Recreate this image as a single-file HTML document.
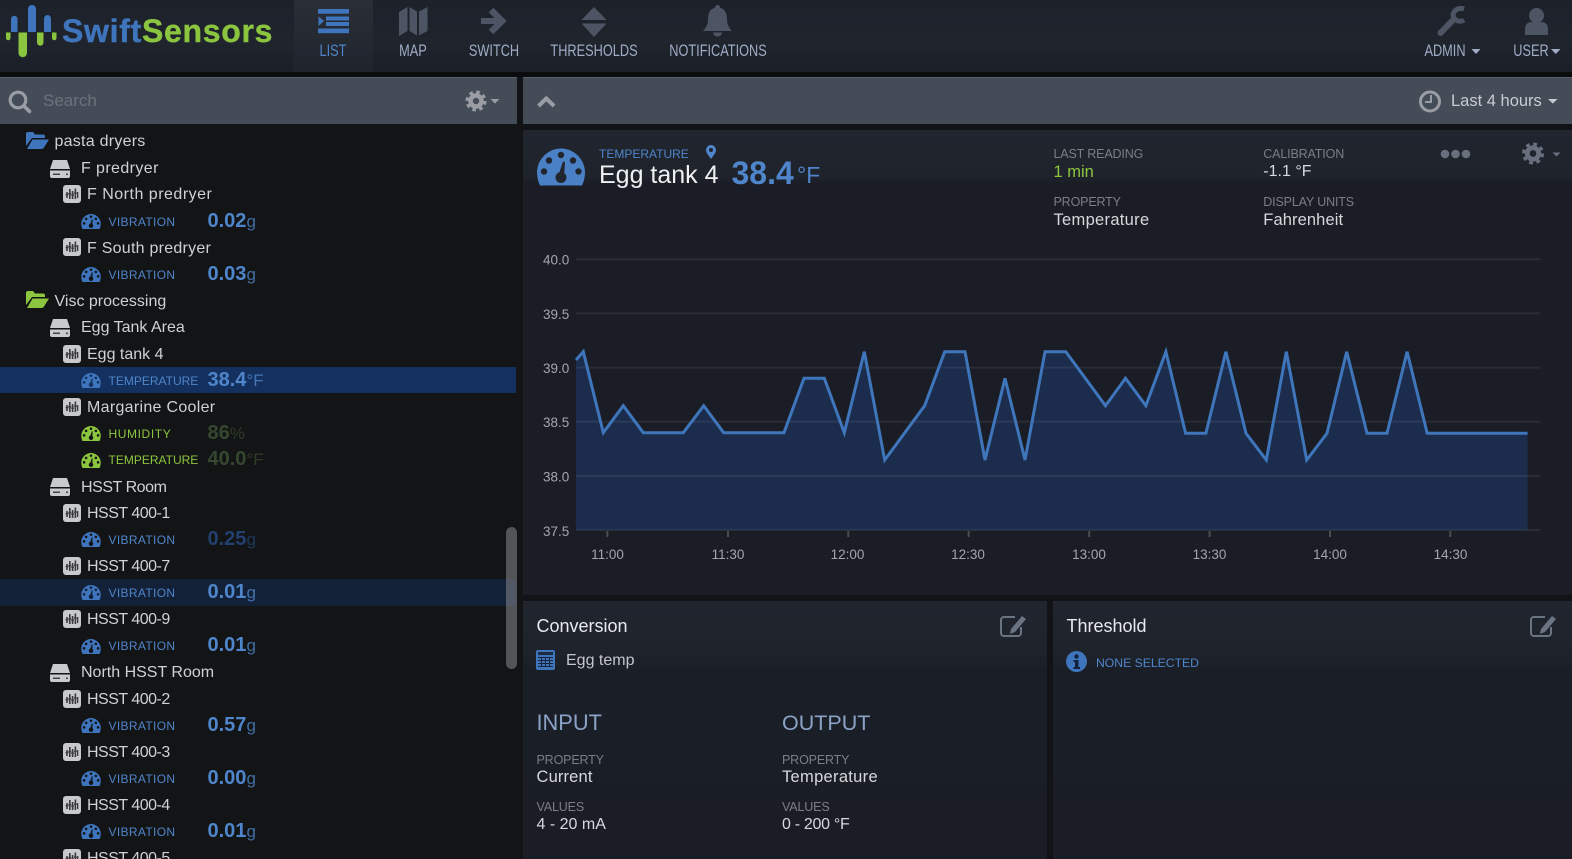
<!DOCTYPE html>
<html><head><meta charset="utf-8"><title>Swift Sensors</title>
<style>
html,body{margin:0;padding:0;width:1572px;height:859px;overflow:hidden;background:#121316;font-family:"Liberation Sans",sans-serif;color:#d4d6da}
.a{position:absolute;white-space:nowrap}
.t{position:absolute;white-space:nowrap;line-height:20px}
#nav{position:absolute;left:0;top:0;width:1572px;height:72px;background:linear-gradient(#1d212a,#1f242d 60%,#1b1f27)}
#tab{position:absolute;left:294px;top:0;width:79px;height:72px;background:linear-gradient(#2a2e37,#20242d)}
.n{position:absolute;top:41px;line-height:20px;font-size:17px;color:#9fadc6;white-space:nowrap;transform:translateX(-50%) scaleX(.75)}
#band{position:absolute;left:0;top:72px;width:1572px;height:5px;background:#0b0c0e}
.bar{position:absolute;top:77px;height:47px;background:#444c58;box-shadow:0 1px 0 #5a616c inset}
#tree{position:absolute;left:0;top:124px;width:523px;height:735px;overflow:hidden;background:#131416}
#rows{position:absolute;left:0;top:3.9px;width:516px}
.r{position:relative;height:26.55px;line-height:26.55px;font-size:16px;color:#cfd1d4;white-space:nowrap}
.r>*{position:absolute}
.r span{top:1.5px}
.r svg{top:50%}
.r .k{font-size:12px;color:#4f86cb;left:108.5px;top:1px}
.k.m{letter-spacing:.35px}
.r .v{left:207.5px;font-size:20px;font-weight:bold;color:#4f86cb;top:0}
.v small{font-size:17px;font-weight:normal;opacity:.8}
.g .k{color:#8cc63f}
.g .v{color:#35482f}
.hl{background:#14305e}
.hl2{background:#122038}
#main{position:absolute;left:523px;top:130px;width:1049px;height:465px;background:linear-gradient(#20252e 0,#1f232c 46px,#1a1d25 54px,#1a1d25)}
.p{position:absolute;top:601px;height:258px;background:linear-gradient(#20252e 0,#1f232c 48px,#1a1e26 70px,#1a1d25)}
.l{font-size:12.5px;color:#7b7e84;letter-spacing:-.15px}
.w{font-size:16.5px;color:#d6d8db}
svg{display:block}
</style></head><body>
<svg width="0" height="0" style="position:absolute"><defs>
<symbol id="ga" viewBox="0 0 48 37"><path fill="currentColor" d="M3 37C1 33 0 28 0 24 0 11 11 0 24 0s24 11 24 24c0 4-1 9-3 13z"/><g fill="var(--h,#131416)"><circle cx="7" cy="23" r="3.2"/><circle cx="12" cy="12" r="3.2"/><circle cx="24" cy="6.5" r="3.2"/><circle cx="36" cy="12" r="3.2"/><circle cx="41.5" cy="23" r="3.2"/><circle cx="24" cy="29" r="5.5"/><path d="M21 28 26 13l2 .5L27 29z"/></g></symbol>
<symbol id="dr" viewBox="0 0 22 18"><path fill="#c9cacc" d="M4 0H18L21 9H1z"/><path fill="#c9cacc" d="M1 10.500H21V16a2 2 0 0 1-2 2H3a2 2 0 0 1-2-2z"/><rect x="4" y="13.500" width="7" height="1.500" fill="#444"/><circle cx="18" cy="14.200" r="1" fill="#444"/></symbol>
<symbol id="mo" viewBox="0 0 18 18"><rect width="18" height="18" rx="3" fill="#c8c9cb"/><g fill="#3a3a3c"><rect x="3.200" y="7" width="1.600" height="6"/><rect x="6" y="4" width="1.600" height="10"/><rect x="8.800" y="6" width="1.600" height="8"/><rect x="11.600" y="3.500" width="1.600" height="10.500"/><rect x="14" y="7" width="1.300" height="6"/><rect x="2.600" y="9" width="2.800" height="1.300"/><rect x="5.400" y="8" width="2.800" height="1.300"/><rect x="8.200" y="9.500" width="2.800" height="1.300"/><rect x="11" y="7.500" width="2.800" height="1.300"/></g></symbol>
<symbol id="fo" viewBox="0 0 23 17"><path fill="currentColor" d="M0 2a2 2 0 0 1 2-2h5l2 2.500h8a2 2 0 0 1 2 2V6H6L0 14z"/><path fill="currentColor" d="M6.500 7.500H23l-5 8a3 3 0 0 1-2 1.500H1z"/></symbol>
<symbol id="ge" viewBox="-12 -12 24 24"><circle r="6" fill="none" stroke="currentColor" stroke-width="5"/><circle r="9.500" fill="none" stroke="currentColor" stroke-width="4" stroke-dasharray="3.800 3.660"/></symbol>
<symbol id="ed" viewBox="0 0 27 22"><path fill="none" stroke="#6b7483" stroke-width="2" d="M15 2H4a3 3 0 0 0-3 3v13a3 3 0 0 0 3 3h14a3 3 0 0 0 3-3v-6"/><path fill="#6b7483" d="M22 1l4 3-11 13-5 2 1-5z"/></symbol>
</defs></svg>

<div id="nav"></div><div id="tab"></div>
<svg class="a" style="left:0;top:0" width="60" height="62"><g fill="#3f75bd"><path d="M11 32V19a3.200 3.200 0 0 1 6.500 0V32z"/><path d="M28 32V9a4 4 0 0 1 8 0V32z"/><path d="M44 32V18.500a3.500 3.500 0 0 1 7 0V32z"/></g><g fill="#8bc53f"><path d="M6 32.500h4.500V38a2.200 2.200 0 0 1-4.500 0z"/><path d="M18.500 32.500H27V53a4.200 4.200 0 0 1-8.500 0z"/><path d="M37 32.500h6.500V42.500a3.200 3.200 0 0 1-6.500 0z"/><path d="M52 32.500h4.500V38a2.200 2.200 0 0 1-4.500 0z"/></g></svg>
<div class="a" style="left:62px;top:12px;font-size:32px;line-height:38px;font-weight:bold;letter-spacing:.7px;color:#3f75bd;-webkit-text-stroke:.4px #3f75bd">Swift<span style="color:#8bc53f;-webkit-text-stroke:.4px #8bc53f">Sensors</span></div>

<svg class="a" style="left:0;top:0" width="1572" height="72">
<g fill="#3f75bd"><rect x="318" y="9" width="31" height="4.700"/><rect x="326" y="16.500" width="23" height="4"/><rect x="326" y="22" width="23" height="4"/><rect x="318" y="28.500" width="31" height="4.700"/><path d="M318.500 16.500 324 21l-5.500 5z"/></g>
<g fill="#4d5564"><path d="M399 12l8.500-5v24l-8.500 5zM409.500 7l7.500 4.500v24l-7.500-4.500zM419 11.500 427.500 7v24L419 35.500z"/><path d="M581.500 20 594 7l12.500 13zM581.500 23.500h25L594 37z"/>
<path d="M717.500 5a2.500 2.500 0 0 1 2.500 2.700c5.500 1.500 7 6 7 11 0 6 2 9 5 12.300H703c3-3.300 5-6.300 5-12.300 0-5 1.500-9.500 7-11A2.500 2.500 0 0 1 717.500 5zM713 32.500h9a4.500 4 0 0 1-9 0z"/>
<circle cx="1536.500" cy="15.500" r="7.500"/><path d="M1525 35V29c0-5 3-7 7-7h9c4 0 7 2 7 7v6z"/></g>
<g stroke="#4d5564" fill="none"><path stroke-width="6" d="M481 21h21"/><path stroke-width="6.500" d="M491 10l11 11-11 11"/><path stroke-width="6" stroke-linecap="round" d="M1440.500 33 1454 19"/><path stroke-width="5" d="M1464 9a8.500 8.500 0 0 0-11 5 7 7 0 0 0 11 6"/></g>
<g fill="#9fadc6"><path d="M1471.500 49h9l-4.500 5zM1551 49h9.500l-4.700 5z"/></g>
</svg>
<div class="n" style="left:333px;color:#4f86cb">LIST</div>
<div class="n" style="left:413px">MAP</div>
<div class="n" style="left:493.500px">SWITCH</div>
<div class="n" style="left:594px">THRESHOLDS</div>
<div class="n" style="left:717.500px">NOTIFICATIONS</div>
<div class="n" style="left:1444.500px">ADMIN</div>
<div class="n" style="left:1531px">USER</div>

<div id="band"></div>
<div class="bar" style="left:0;width:517px"></div>
<div class="bar" style="left:523px;width:1049px"></div>
<svg class="a" style="left:0;top:77px" width="1572" height="47">
<g fill="none" stroke="#9a9da3"><circle cx="18" cy="23" r="7.800" stroke-width="3.200"/><path stroke-width="3.600" stroke-linecap="round" d="M24 29l5.500 5.500"/><path stroke-width="4" d="M538.500 29l7.800-7.500 7.800 7.500"/><circle cx="1430" cy="24.500" r="9.500" stroke-width="3"/><path stroke-width="2" d="M1431 18v7h-6"/></g>
<use href="#ge" x="465" y="13" width="22" height="22" color="#9a9da3"/>
<path fill="#9a9da3" d="M490.500 22h9l-4.500 4.500z"/>
<path fill="#c8cbd0" d="M1548 22h9.500l-4.700 4.500z"/>
</svg>
<div class="t" style="left:43px;top:90.500px;font-size:17px;color:#6c727c">Search</div>
<div class="t" style="left:1451px;top:91px;font-size:16.500px;color:#c8cbd0">Last 4 hours</div>

<div id="tree"><div id="rows">
<div class="r"><svg style="left:26px;margin-top:-9px;color:#3f75bd" width="23" height="17"><use href="#fo"/></svg><span style="left:54.500px;letter-spacing:.25px">pasta dryers</span></div>
<div class="r"><svg style="left:49px;margin-top:-8px" width="22" height="18"><use href="#dr"/></svg><span style="left:81px;letter-spacing:.4px">F predryer</span></div>
<div class="r"><svg style="left:63px;margin-top:-9px" width="18" height="18"><use href="#mo"/></svg><span style="left:87px;letter-spacing:.5px">F North predryer</span></div>
<div class="r"><svg style="left:80.500px;margin-top:-7px;color:#3f75bd" width="20" height="15"><use href="#ga"/></svg><span class="k m">VIBRATION</span><span class="v">0.02<small>g</small></span></div>
<div class="r"><svg style="left:63px;margin-top:-9px" width="18" height="18"><use href="#mo"/></svg><span style="left:87px;letter-spacing:.25px">F South predryer</span></div>
<div class="r"><svg style="left:80.500px;margin-top:-7px;color:#3f75bd" width="20" height="15"><use href="#ga"/></svg><span class="k m">VIBRATION</span><span class="v">0.03<small>g</small></span></div>
<div class="r"><svg style="left:26px;margin-top:-9px;color:#8cc63f" width="23" height="17"><use href="#fo"/></svg><span style="left:54.500px">Visc processing</span></div>
<div class="r"><svg style="left:49px;margin-top:-8px" width="22" height="18"><use href="#dr"/></svg><span style="left:81px">Egg Tank Area</span></div>
<div class="r"><svg style="left:63px;margin-top:-9px" width="18" height="18"><use href="#mo"/></svg><span style="left:87px">Egg tank 4</span></div>
<div class="r hl" style="--h:#14305e"><svg style="left:80.500px;margin-top:-7px;color:#3f75bd" width="20" height="15"><use href="#ga"/></svg><span class="k">TEMPERATURE</span><span class="v">38.4<small>°F</small></span></div>
<div class="r"><svg style="left:63px;margin-top:-9px" width="18" height="18"><use href="#mo"/></svg><span style="left:87px;letter-spacing:.3px">Margarine Cooler</span></div>
<div class="r g"><svg style="left:80.500px;margin-top:-7px;color:#8cc63f" width="20" height="15"><use href="#ga"/></svg><span class="k" style="letter-spacing:.6px">HUMIDITY</span><span class="v">86<small>%</small></span></div>
<div class="r g"><svg style="left:80.500px;margin-top:-7px;color:#8cc63f" width="20" height="15"><use href="#ga"/></svg><span class="k">TEMPERATURE</span><span class="v">40.0<small>°F</small></span></div>
<div class="r"><svg style="left:49px;margin-top:-8px" width="22" height="18"><use href="#dr"/></svg><span style="left:81px;letter-spacing:-.45px">HSST Room</span></div>
<div class="r"><svg style="left:63px;margin-top:-9px" width="18" height="18"><use href="#mo"/></svg><span style="left:87px;letter-spacing:-.5px">HSST 400-1</span></div>
<div class="r"><svg style="left:80.500px;margin-top:-7px;color:#3f75bd" width="20" height="15"><use href="#ga"/></svg><span class="k m">VIBRATION</span><span class="v" style="color:#23406e">0.25<small>g</small></span></div>
<div class="r"><svg style="left:63px;margin-top:-9px" width="18" height="18"><use href="#mo"/></svg><span style="left:87px;letter-spacing:-.5px">HSST 400-7</span></div>
<div class="r hl2" style="--h:#122038"><svg style="left:80.500px;margin-top:-7px;color:#3f75bd" width="20" height="15"><use href="#ga"/></svg><span class="k m">VIBRATION</span><span class="v">0.01<small>g</small></span></div>
<div class="r"><svg style="left:63px;margin-top:-9px" width="18" height="18"><use href="#mo"/></svg><span style="left:87px;letter-spacing:-.5px">HSST 400-9</span></div>
<div class="r"><svg style="left:80.500px;margin-top:-7px;color:#3f75bd" width="20" height="15"><use href="#ga"/></svg><span class="k m">VIBRATION</span><span class="v">0.01<small>g</small></span></div>
<div class="r"><svg style="left:49px;margin-top:-8px" width="22" height="18"><use href="#dr"/></svg><span style="left:81px">North HSST Room</span></div>
<div class="r"><svg style="left:63px;margin-top:-9px" width="18" height="18"><use href="#mo"/></svg><span style="left:87px;letter-spacing:-.5px">HSST 400-2</span></div>
<div class="r"><svg style="left:80.500px;margin-top:-7px;color:#3f75bd" width="20" height="15"><use href="#ga"/></svg><span class="k m">VIBRATION</span><span class="v">0.57<small>g</small></span></div>
<div class="r"><svg style="left:63px;margin-top:-9px" width="18" height="18"><use href="#mo"/></svg><span style="left:87px;letter-spacing:-.5px">HSST 400-3</span></div>
<div class="r"><svg style="left:80.500px;margin-top:-7px;color:#3f75bd" width="20" height="15"><use href="#ga"/></svg><span class="k m">VIBRATION</span><span class="v">0.00<small>g</small></span></div>
<div class="r"><svg style="left:63px;margin-top:-9px" width="18" height="18"><use href="#mo"/></svg><span style="left:87px;letter-spacing:-.5px">HSST 400-4</span></div>
<div class="r"><svg style="left:80.500px;margin-top:-7px;color:#3f75bd" width="20" height="15"><use href="#ga"/></svg><span class="k m">VIBRATION</span><span class="v">0.01<small>g</small></span></div>
<div class="r"><svg style="left:63px;margin-top:-9px" width="18" height="18"><use href="#mo"/></svg><span style="left:87px;letter-spacing:-.5px">HSST 400-5</span></div>
</div>
<div class="a" style="left:505.700px;top:402.700px;width:11px;height:142.500px;border-radius:6px;background:rgba(125,127,132,.6)"></div>
</div>
<div id="main"></div>
<div class="p" style="left:523px;width:524px"></div>
<div class="p" style="left:1053px;width:519px"></div>

<svg class="a" style="left:537px;top:148px;color:#4a80c6" width="48" height="38"><use href="#ga" style="--h:#20252e"/></svg>
<div class="t" style="left:599px;top:143.700px;font-size:12px;color:#4f86cb">TEMPERATURE</div>
<svg class="a" style="left:705.500px;top:145px" width="10" height="14"><path fill="#4f86cb" fill-rule="evenodd" d="M5 0a5 5 0 0 1 5 5c0 3-3 6-5 9-2-3-5-6-5-9a5 5 0 0 1 5-5zM5 3a2 2 0 1 0 0 4 2 2 0 0 0 0-4z"/></svg>
<div class="t" style="left:599px;top:165px;font-size:25px;color:#eef0f2">Egg tank 4</div>
<div class="t" style="left:731.500px;top:162.500px;font-size:32px;font-weight:bold;color:#4f86cb">38.4</div>
<div class="t" style="left:797px;top:165px;font-size:23px;color:#4f86cb">°F</div>

<div class="t l" style="left:1053.500px;top:144px">LAST READING</div>
<div class="t" style="left:1053.500px;top:162px;font-size:16.500px;color:#8cc63f">1 min</div>
<div class="t l" style="left:1263.300px;top:144px">CALIBRATION</div>
<div class="t w" style="left:1263.300px;top:162px;font-size:16px">-1.1 °F</div>
<div class="t l" style="left:1053.500px;top:192px">PROPERTY</div>
<div class="t w" style="left:1053.500px;top:209.500px;letter-spacing:.3px">Temperature</div>
<div class="t l" style="left:1263.300px;top:192px">DISPLAY UNITS</div>
<div class="t w" style="left:1263.300px;top:209.500px;letter-spacing:.1px">Fahrenheit</div>
<svg class="a" style="left:1430px;top:140px;color:#68707e" width="142" height="30">
<g fill="#68707e"><circle cx="15" cy="14" r="4.300"/><circle cx="25.500" cy="14" r="4.300"/><circle cx="36" cy="14" r="4.300"/><path d="M122.500 12.500h8l-4 4z"/></g>
<use href="#ge" x="91.500" y="2" width="23" height="23"/>
</svg>

<svg class="a" style="left:0;top:0" width="1572" height="600">
<path fill="#1b2c4d" d="M576 360 583.300 351.700 603.300 432.700 623.300 405.700 643.300 432.700 683.300 432.700 703.700 405.700 723.700 432.700 784 432.700 804 378.300 824.300 378.300 844.300 432.700 864.300 351.700 884.700 460 924.700 405.700 944.700 351.700 965 351.700 985 460 1005 378.300 1025 460 1045 351.700 1065.800 351.700 1105.500 405.700 1125.500 378.300 1145.900 405.700 1165.900 351.700 1185.600 433.300 1205.900 433.300 1225.900 351.700 1246 433.300 1266.300 460 1286.300 351.700 1306.700 460 1327 433.300 1346.700 351.700 1367 433.300 1387 433.300 1407.100 351.700 1427.200 433.300 1527.600 433.300V530H576z"/>
<g stroke="#fff" stroke-opacity=".07" stroke-width="2"><path d="M576 259.300H1540.500M576 313.400H1540.500M576 367.600H1540.500M576 421.700H1540.500M576 476H1540.500M576 530H1540.500"/></g>
<path fill="none" stroke="#3f76bb" stroke-width="3" stroke-linejoin="miter" d="M576 360 583.300 351.700 603.300 432.700 623.300 405.700 643.300 432.700 683.300 432.700 703.700 405.700 723.700 432.700 784 432.700 804 378.300 824.300 378.300 844.300 432.700 864.300 351.700 884.700 460 924.700 405.700 944.700 351.700 965 351.700 985 460 1005 378.300 1025 460 1045 351.700 1065.800 351.700 1105.500 405.700 1125.500 378.300 1145.900 405.700 1165.900 351.700 1185.600 433.300 1205.900 433.300 1225.900 351.700 1246 433.300 1266.300 460 1286.300 351.700 1306.700 460 1327 433.300 1346.700 351.700 1367 433.300 1387 433.300 1407.100 351.700 1427.200 433.300 1527.600 433.300"/>
<path stroke="#4a4d54" stroke-width="2" d="M607.300 531v6M728 531v6M848.300 531v6M968.700 531v6M1089.200 531v6M1209.600 531v6M1330 531v6M1450.300 531v6"/>
<g font-family="Liberation Sans,sans-serif" font-size="13.500" fill="#a3a6ab"><text x="543" y="264.300">40.0</text><text x="543" y="318.800">39.5</text><text x="543" y="373">39.0</text><text x="543" y="427">38.5</text><text x="543" y="481.500">38.0</text><text x="543" y="536">37.5</text>
<g text-anchor="middle"><text x="607.500" y="559">11:00</text><text x="728" y="559">11:30</text><text x="847.500" y="559">12:00</text><text x="968" y="559">12:30</text><text x="1089" y="559">13:00</text><text x="1209.500" y="559">13:30</text><text x="1330" y="559">14:00</text><text x="1450.500" y="559">14:30</text></g></g>
</svg>

<div class="t" style="left:536.500px;top:615.500px;font-size:18px;color:#e8eaee">Conversion</div>
<svg class="a" style="left:1000px;top:615px" width="27" height="22"><use href="#ed"/></svg>
<svg class="a" style="left:536px;top:650px" width="19" height="20"><rect width="19" height="20" rx="2" fill="#3f75bd"/><rect x="2" y="2" width="15" height="3" fill="#1d2a3f"/><g fill="#16233a"><path d="M2 7h15v1H2zM2 10h15v1H2zM2 13h15v1H2zM2 16h15v1H2zM5 7h1v10H5zM9 7h1v10H9zM13 7h1v10h-1z"/></g></svg>
<div class="t" style="left:566px;top:650.500px;font-size:16px;color:#c4c6ca">Egg temp</div>
<div class="t" style="left:536.500px;top:712.500px;font-size:21.800px;color:#8ba3c7">INPUT</div>
<div class="t" style="left:782px;top:712.500px;font-size:21.500px;color:#8ba3c7">OUTPUT</div>
<div class="t l" style="left:536.500px;top:749.500px">PROPERTY</div>
<div class="t w" style="left:536.500px;top:767px;letter-spacing:.15px">Current</div>
<div class="t l" style="left:782px;top:749.500px">PROPERTY</div>
<div class="t w" style="left:782px;top:767px;letter-spacing:.3px">Temperature</div>
<div class="t l" style="left:536.500px;top:797px">VALUES</div>
<div class="t w" style="left:536.500px;top:815px;font-size:16px">4 - 20 mA</div>
<div class="t l" style="left:782px;top:797px">VALUES</div>
<div class="t w" style="left:782px;top:815px;font-size:16px;letter-spacing:-.3px">0 - 200 °F</div>

<div class="t" style="left:1066.500px;top:615.500px;font-size:18px;color:#e8eaee">Threshold</div>
<svg class="a" style="left:1530px;top:615px" width="27" height="22"><use href="#ed"/></svg>
<svg class="a" style="left:1066px;top:651px" width="21" height="21"><circle cx="10.500" cy="10.500" r="10.500" fill="#3f75bd"/><g fill="#14233d"><circle cx="10.500" cy="5.500" r="2.200"/><path d="M7.500 9h5v7h1.500v2H7.500v-2H9v-5H7.500z"/></g></svg>
<div class="t" style="left:1096px;top:652.500px;font-size:12.200px;color:#4f86cb">NONE SELECTED</div>
</body></html>
